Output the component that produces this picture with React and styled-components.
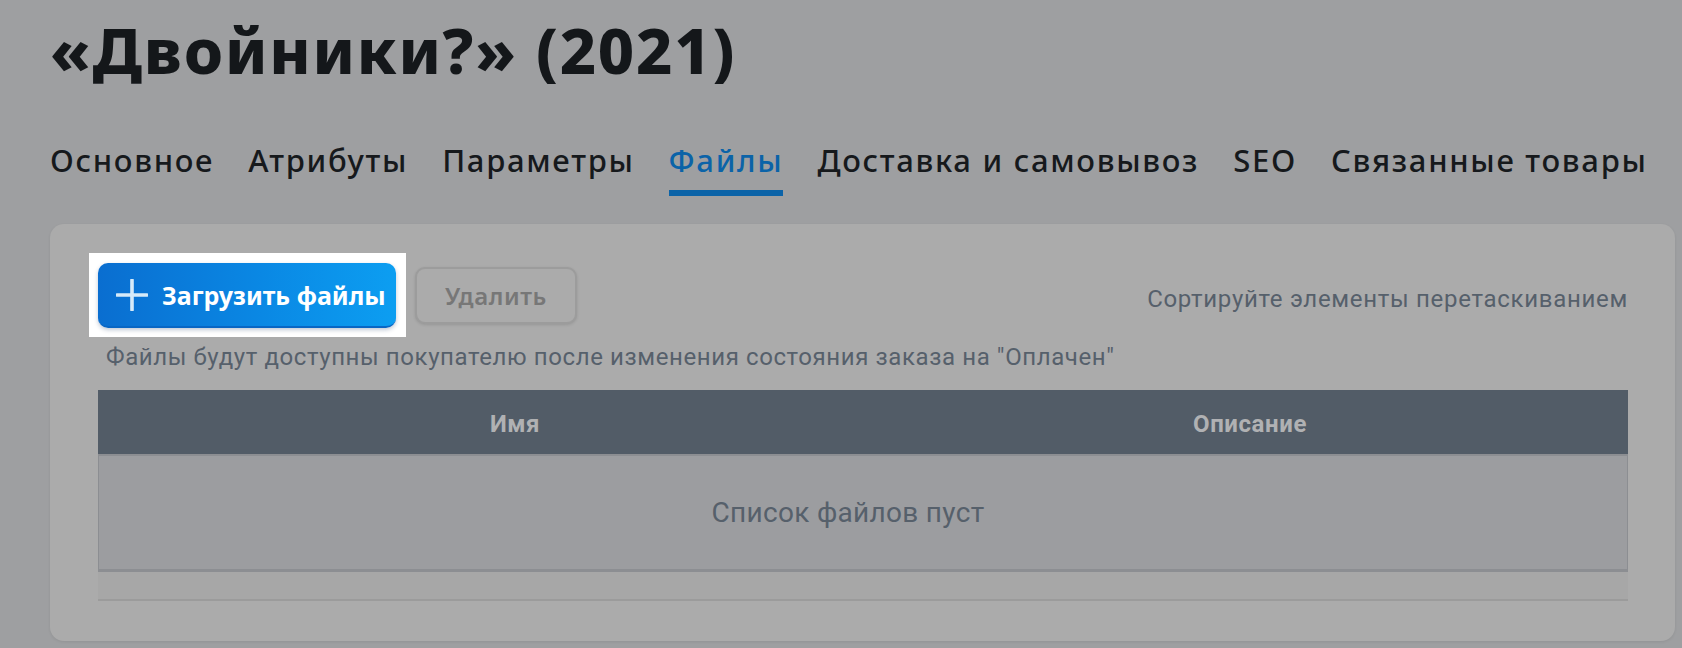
import styled, { createGlobalStyle } from "styled-components";

const GlobalStyle = createGlobalStyle`
  body {
    margin: 0;
    background: #9e9fa1;
    font-family: Roboto, "Liberation Sans", sans-serif;
  }
`;

const tabs = [
  "Основное",
  "Атрибуты",
  "Параметры",
  "Файлы",
  "Доставка и самовывоз",
  "SEO",
  "Связанные товары"
];

const columns = [
  { title: "Имя", width: "834px" },
  { title: "Описание", width: "636px" },
  { title: "", width: "60px" }
];

const PlusIcon = () => (
  <svg width="32" height="32" viewBox="0 0 32 32" fill="none">
    <path
      d="M16 1v30M1 16h30"
      stroke="#d6eaf9"
      strokeWidth="3.6"
      strokeLinecap="round"
    />
  </svg>
);

const App = () => {
  return (
    <>
      <GlobalStyle />
      <Page>
        <Title>«Двойники?» (2021)</Title>

        <Tabs>
          {tabs.map(tab => (
            <Tab key={tab} $active={tab === "Файлы"}>
              {tab}
            </Tab>
          ))}
        </Tabs>

        <Card>
          <Toolbar>
            <Highlight>
              <UploadButton type="button">
                <PlusIcon />
                Загрузить файлы
              </UploadButton>
            </Highlight>
            <DeleteButton type="button" disabled>
              Удалить
            </DeleteButton>
            <SortHint>Сортируйте элементы перетаскиванием</SortHint>
          </Toolbar>

          <Note>
            Файлы будут доступны покупателю после изменения состояния заказа на
            "Оплачен"
          </Note>

          <Table>
            <HeadRow>
              {columns.map(col => (
                <HeadCell key={col.width}>{col.title}</HeadCell>
              ))}
            </HeadRow>
            <EmptyRow>Список файлов пуст</EmptyRow>
            <FooterBand />
          </Table>
        </Card>
      </Page>
    </>
  );
};

const Page = styled.div`
  padding: 12px 7px 7px 50px;
`;

const Title = styled.h1`
  margin: 0;
  font-family: "Noto Sans", sans-serif;
  font-weight: 800;
  font-size: 63px;
  line-height: 76px;
  letter-spacing: 1.8px;
  color: #14171a;
`;

const Tabs = styled.nav`
  display: flex;
  gap: 34px;
  margin-top: 54px;
`;

const Tab = styled.div`
  font-family: "Noto Sans", sans-serif;
  font-weight: 500;
  font-size: 31px;
  line-height: 36px;
  letter-spacing: 1.7px;
  padding-bottom: 12px;
  color: ${({ $active }) => ($active ? "#0b63a8" : "#16191c")};
  border-bottom: 6px solid
    ${({ $active }) => ($active ? "#0b63a8" : "transparent")};
`;

const Card = styled.section`
  margin-top: 28px;
  height: 417px;
  box-sizing: border-box;
  padding: 39px 47px 0 48px;
  background: #ababab;
  border-radius: 14px;
  box-shadow: 0 1px 3px rgba(0, 0, 0, 0.08);
`;

const Toolbar = styled.div`
  display: flex;
  align-items: center;
  height: 65px;
`;

const Highlight = styled.div`
  position: relative;
  display: flex;

  &::before {
    content: "";
    position: absolute;
    inset: -10px -10px -9px -9px;
    background: #ffffff;
  }
`;

const UploadButton = styled.button`
  position: relative;
  display: flex;
  align-items: center;
  gap: 14px;
  width: 298px;
  height: 65px;
  padding: 0 0 0 18px;
  border: none;
  border-bottom: 2px solid #0866c4;
  border-radius: 10px;
  background: linear-gradient(90deg, #0a6ed0 0%, #0a88e4 55%, #0c9ef1 100%);
  box-shadow: 0 2px 4px rgba(0, 40, 90, 0.25);
  color: #ffffff;
  font-family: "Noto Sans", sans-serif;
  font-weight: 700;
  font-size: 25px;
  cursor: pointer;
`;

const DeleteButton = styled.button`
  width: 162px;
  height: 57px;
  margin-left: 19px;
  border: 2px solid #9c9c9c;
  border-radius: 10px;
  background: #ababab;
  box-shadow: 0 1px 3px rgba(0, 0, 0, 0.12);
  color: #777777;
  font-family: "Noto Sans", sans-serif;
  font-weight: 600;
  font-size: 24px;
  letter-spacing: 0.6px;
`;

const SortHint = styled.span`
  margin-left: auto;
  padding-top: 6px;
  color: #56606b;
  font-size: 24px;
  letter-spacing: 0.7px;
`;

const Note = styled.p`
  margin: 15px 0 0;
  padding-left: 8px;
  line-height: 28px;
  color: #56606b;
  font-size: 24px;
  letter-spacing: 0.6px;
`;

const Table = styled.div`
  margin-top: 19px;
`;

const HeadRow = styled.div`
  display: grid;
  grid-template-columns: ${columns.map(c => c.width).join(" ")};
  height: 64px;
  background: #525c67;
`;

const HeadCell = styled.div`
  display: flex;
  align-items: center;
  justify-content: center;
  padding-top: 4px;
  color: #b0b1b3;
  font-weight: 700;
  font-size: 24px;
  letter-spacing: 0.6px;
`;

const EmptyRow = styled.div`
  display: flex;
  align-items: center;
  justify-content: center;
  height: 113px;
  padding-right: 30px;
  border: 1px solid #8c8e92;
  border-top-width: 2px;
  border-bottom-width: 3px;
  background: #9c9da0;
  color: #56606b;
  font-size: 28px;
  letter-spacing: 0.3px;
`;

const FooterBand = styled.div`
  height: 27px;
  background: #a7a7a7;
  border-bottom: 2px solid #9b9b9b;
`;

export default App;
